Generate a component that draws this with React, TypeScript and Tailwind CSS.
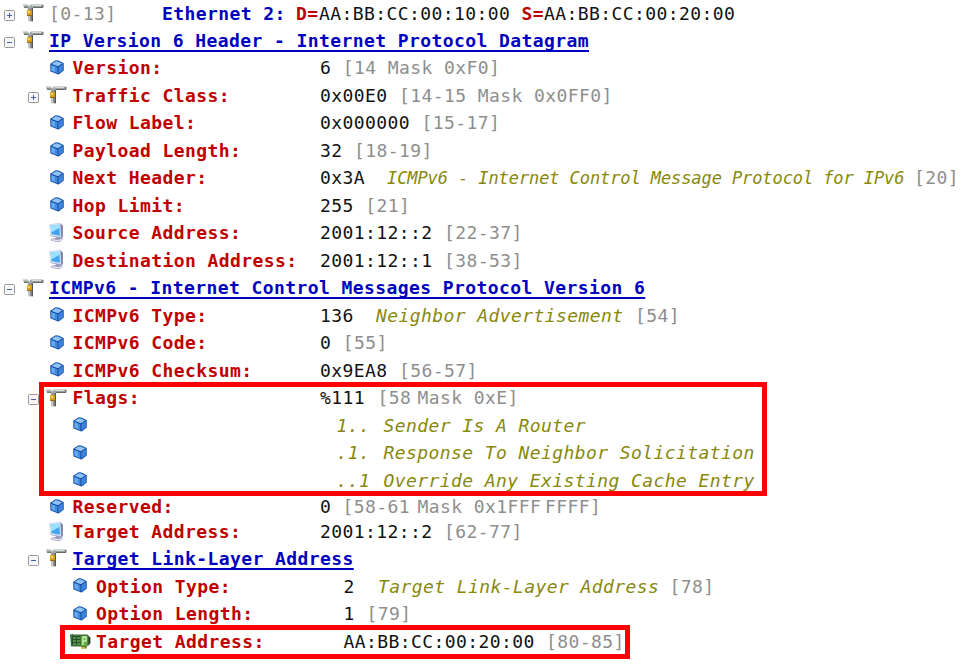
import React from "react";

type Kind = "gray" | "black" | "red" | "blue" | "note" | "link";
type Seg = { x: number; t: string; k: Kind; tight?: boolean };
type Icon = "tool" | "cube" | "monitor" | "card";
type Row = { d: number; e?: "+" | "-"; i: Icon; h?: number; label: string; lk?: Kind; segs: Seg[] };

const VALUE_X = 320;

const kinds: Record<Kind, string> = {
  gray: "text-[#8e8e8e]",
  black: "text-[#111111]",
  red: "font-bold text-[#c00000]",
  blue: "font-bold text-[#0000c0]",
  note: "italic text-[#88880a]",
  link: "font-bold text-[#0000c0] underline decoration-2 underline-offset-[3px] [text-decoration-skip-ink:none]",
};

const b = (x: number, t: string): Seg => ({ x, t, k: "black" });
const g = (x: number, t: string): Seg => ({ x, t, k: "gray" });
const n = (x: number, t: string, tight = false): Seg => ({ x, t, k: "note", tight });

const rows: Row[] = [
  {
    d: 0, e: "+", i: "tool", h: 27, label: "[0-13]", lk: "gray",
    segs: [
      { x: 162, t: "Ethernet 2:", k: "blue" },
      { x: 296, t: "D=", k: "red" },
      b(319, "AA:BB:CC:00:10:00"),
      { x: 521.5, t: "S=", k: "red" },
      b(544, "AA:BB:CC:00:20:00"),
    ],
  },
  { d: 0, e: "-", i: "tool", label: "IP Version 6 Header - Internet Protocol Datagram", lk: "link", segs: [] },
  { d: 1, i: "cube", label: "Version:", segs: [b(VALUE_X, "6"), g(342.75, "[14 Mask 0xF0]")] },
  { d: 1, e: "+", i: "tool", label: "Traffic Class:", segs: [b(VALUE_X, "0x00E0"), g(399, "[14-15 Mask 0x0FF0]")] },
  { d: 1, i: "cube", label: "Flow Label:", segs: [b(VALUE_X, "0x000000"), g(421.5, "[15-17]")] },
  { d: 1, i: "cube", label: "Payload Length:", segs: [b(VALUE_X, "32"), g(354, "[18-19]")] },
  {
    d: 1, i: "cube", label: "Next Header:",
    segs: [b(VALUE_X, "0x3A"), n(387, "ICMPv6 - Internet Control Message Protocol for IPv6", true), g(914, "[20]")],
  },
  { d: 1, i: "cube", label: "Hop Limit:", segs: [b(VALUE_X, "255"), g(365.25, "[21]")] },
  { d: 1, i: "monitor", label: "Source Address:", segs: [b(VALUE_X, "2001:12::2"), g(444, "[22-37]")] },
  { d: 1, i: "monitor", label: "Destination Address:", segs: [b(VALUE_X, "2001:12::1"), g(444, "[38-53]")] },
  { d: 0, e: "-", i: "tool", label: "ICMPv6 - Internet Control Messages Protocol Version 6", lk: "link", segs: [] },
  { d: 1, i: "cube", label: "ICMPv6 Type:", segs: [b(VALUE_X, "136"), n(376, "Neighbor Advertisement"), g(635, "[54]")] },
  { d: 1, i: "cube", label: "ICMPv6 Code:", segs: [b(VALUE_X, "0"), g(342.75, "[55]")] },
  { d: 1, i: "cube", label: "ICMPv6 Checksum:", segs: [b(VALUE_X, "0x9EA8"), g(399, "[56-57]")] },
  { d: 1, e: "-", i: "tool", label: "Flags:", segs: [b(VALUE_X, "%111"), g(377.5, "[58"), g(417.5, "Mask 0xE]")] },
  { d: 2, i: "cube", label: "", segs: [n(336.5, "1.."), n(383.5, "Sender Is A Router")] },
  { d: 2, i: "cube", label: "", segs: [n(336.5, ".1."), n(383.5, "Response To Neighbor Solicitation")] },
  { d: 2, i: "cube", label: "", segs: [n(336.5, "..1"), n(383.5, "Override Any Existing Cache Entry")] },
  {
    d: 1, i: "cube", h: 25, label: "Reserved:",
    segs: [b(VALUE_X, "0"), g(342.5, "[58-61"), g(417.5, "Mask 0x1FFF"), g(545, "FFFF]")],
  },
  { d: 1, i: "monitor", h: 25, label: "Target Address:", segs: [b(VALUE_X, "2001:12::2"), g(444, "[62-77]")] },
  { d: 1, e: "-", i: "tool", h: 28.5, label: "Target Link-Layer Address", lk: "link", segs: [] },
  { d: 2, i: "cube", label: "Option Type:", segs: [b(343.5, "2"), n(378, "Target Link-Layer Address"), g(669.5, "[78]")] },
  { d: 2, i: "cube", label: "Option Length:", segs: [b(343.5, "1"), g(366.5, "[79]")] },
  { d: 2, i: "card", label: "Target Address:", segs: [b(343.5, "AA:BB:CC:00:20:00"), g(546, "[80-85]")] },
];

function Expander({ sign }: { sign: "+" | "-" }) {
  return (
    <svg className="mt-[3px] ml-[4px] h-[11px] w-[11px]" viewBox="0 0 11 11">
      <rect x="0.5" y="0.5" width="10" height="10" rx="1" fill="#f7f7f7" stroke="#989898" />
      <path d="M3 5.5h5" stroke="#4360ac" />
      {sign === "+" && <path d="M5.5 3v5" stroke="#4360ac" />}
    </svg>
  );
}

function Tool() {
  return (
    <svg className="-mt-[1px] h-[18px] w-[21px]" viewBox="0 0 21 18">
      <path d="M0 .5h5l1.5 1.5L8 .5h12v3.2H10L8.5 5H5.5L4 3.7H1z" fill="#a3a8a8" />
      <path d="M1 1h4l1.5 1.6M9 1.5h9" stroke="#d5dada" fill="none" />
      <path d="M1 3.2h3l1 1M10 3.4h10V1" stroke="#5c605e" fill="none" />
      <path d="M5 4.5h5v12.8H5.5z" fill="#8f9491" />
      <path d="M9.3 4v13.3" stroke="#505552" strokeWidth="1.3" />
      <path d="M6.3 11v6" stroke="#d0d5d3" />
      <rect x="4" y="6" width="5" height="5.5" rx=".8" fill="#dba018" />
      <path d="M5 7h2v2H5z" fill="#ffe067" />
      <path d="M4 11.4h5" stroke="#966406" />
    </svg>
  );
}

function Cube() {
  return (
    <svg className="-mt-[2px] h-[15px] w-[14px]" viewBox="0 0 14 15">
      <path d="M.8 4 5.5.9l2.8.1 4.9 2.4v7L8.4 14 .9 10.9z" fill="#4a95e6" stroke="#1b55ab" strokeWidth="1.1" strokeLinejoin="round" />
      <path d="m1.6 4.1 4-2.5 2.6.1 4 2-4.2 2.5z" fill="#8fc3f5" />
      <path d="M8.5 7.2 12.5 4.5v5.7L8.5 13z" fill="#3c83dc" />
      <path d="M1.6 5.2 7.4 7.4v5.3L1.6 10.4z" fill="#64abf0" />
      <path d="M4.8 6.6 7.4 7.6v5L4.8 11.6z" fill="#418bdf" />
      <path d="m1.2 4.4 6.7 2.5 4.8-3.2M7.9 6.9v6.6" stroke="#12439a" strokeWidth="1" fill="none" />
    </svg>
  );
}

function Monitor() {
  return (
    <svg className="-mt-[1px] h-[20px] w-[15px]" viewBox="0 0 15 20">
      <path d="m7 12 4.5 1 2.3 3.2-3.6 3-7.6-1.1-.8-2.2 5-1z" fill="#9a99bc" />
      <path d="m2.6 16 6.6 1 3.8-1.6-.8 1.8-3 1.3-6-1z" fill="#e2e2f0" />
      <path d="M.5 1.2 11.3.2 14 2.5v11.7l-2 1L1.3 13z" fill="#9ca7c2" />
      <path d="M.4 1.3 11 .3l1 13.8-10.6-1.6z" fill="#d5e7f7" />
      <path d="m1.7 2.5 8.4-.8.9 11-8.5-1.4z" fill="#43a5ef" />
      <path d="m1.7 2.5 8.4-.8.2 3.2-8.1 4.6z" fill="#9ce2ff" />
      <path d="m12 1.3 1.6 1.5v11.2l-1.4.6z" fill="#7d85a9" />
    </svg>
  );
}

function Card() {
  return (
    <svg className="h-[17px] w-[21px]" viewBox="0 0 21 17">
      <path d="M0 1h3v.5h14.5l3 3v6l-2 2-2 1v2h-5v-2H1z" fill="#3d6f37" />
      <path d="M2 3h8v9H2z" fill="#235030" />
      <path d="M3 4h3v2H3zm4 0h3v2H7zM3 7h3v2H3zm4 0h3v2H7zm-4 3h3v2H3zm4 0h3v2H7z" fill="#568e48" />
      <path d="M11 3h6.5v10H11z" fill="#61ad3d" />
      <path d="M13 12V4h3v4h-3" fill="none" stroke="#d4edbd" strokeWidth="1.3" />
      <path d="M11 14h4v2h-4z" fill="#d9bd42" />
      <path d="M18.5 4.5H20v6h-1.5z" fill="#303631" />
      <path d="M0 1h2v1H0z" fill="#85938a" />
    </svg>
  );
}

const icons = { tool: Tool, cube: Cube, monitor: Monitor, card: Card };

function TreeRow({ row }: { row: Row }) {
  const IconShape = icons[row.i];
  const firstX = row.segs.length ? row.segs[0].x : 965;
  return (
    <div className="flex items-center" style={{ height: row.h ?? 27.5 }}>
      <div className="flex shrink-0 items-center" style={{ width: firstX, paddingLeft: row.d * 23.5 }}>
        <span className="w-[18px] shrink-0">{row.e && <Expander sign={row.e} />}</span>
        <span className="mr-[0.5px] flex w-[30.5px] shrink-0 items-center justify-center">
          <IconShape />
        </span>
        <span className={kinds[row.lk ?? "red"]}>{row.label}</span>
      </div>
      {row.segs.map((s, i) => (
        <span
          key={i}
          className={`shrink-0 ${kinds[s.k]} ${s.tight ? "text-[17px] tracking-[-0.09px]" : ""}`}
          style={{ width: i + 1 < row.segs.length ? row.segs[i + 1].x - s.x : undefined }}
        >
          {s.t}
        </span>
      ))}
    </div>
  );
}

export default function App() {
  return (
    <main className="relative h-[665px] w-[965px] overflow-hidden bg-white font-['DejaVu_Sans_Mono',monospace] text-[18px] leading-[26px] tracking-[0.413px] whitespace-pre">
      {rows.map((r, i) => (
        <TreeRow key={i} row={r} />
      ))}
      <div className="absolute top-[382px] left-[39px] h-[114px] w-[728px] border-5 border-[#ff0000]" />
      <div className="absolute top-[625px] left-[60px] h-[34px] w-[570px] border-5 border-[#ff0000]" />
    </main>
  );
}
